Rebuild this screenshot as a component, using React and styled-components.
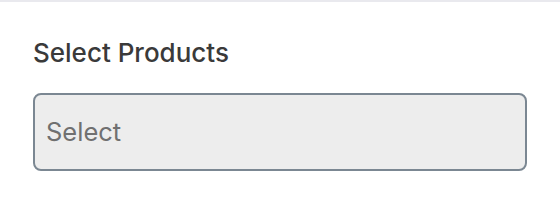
import React from "react";
import styled, { createGlobalStyle } from "styled-components";

const Global = createGlobalStyle`
  html, body { margin: 0; padding: 0; background: #ffffff; }
  body { width: 560px; height: 204px; overflow: hidden; }
`;

const Page = styled.div`
  width: 560px;
  height: 204px;
  box-sizing: border-box;
  border-top: 2px solid #e9e9ee;
  background: #ffffff;
`;

const Field = styled.div`
  display: flex;
  flex-direction: column;
  gap: 25px;
  padding: 36px 33px 0 33px;
`;

const Label = styled.label`
  font-family: Inter, Roboto, sans-serif;
  font-weight: 500;
  font-size: 26px;
  line-height: 30px;
  color: #3a3a3a;
`;

const SelectBox = styled.div`
  box-sizing: border-box;
  height: 78px;
  width: 494px;
  display: flex;
  align-items: center;
  padding: 0 11px;
  border: 2px solid #7b8792;
  border-radius: 8px;
  background: #ededed;
`;

const Placeholder = styled.span`
  font-family: Inter, Roboto, sans-serif;
  font-size: 25.5px;
  line-height: 30px;
  color: #707070;
`;

export default function App() {
  return (
    <>
      <Global />
      <Page>
        <Field>
          <Label>Select Products</Label>
          <SelectBox>
            <Placeholder>Select</Placeholder>
          </SelectBox>
        </Field>
      </Page>
    </>
  );
}
